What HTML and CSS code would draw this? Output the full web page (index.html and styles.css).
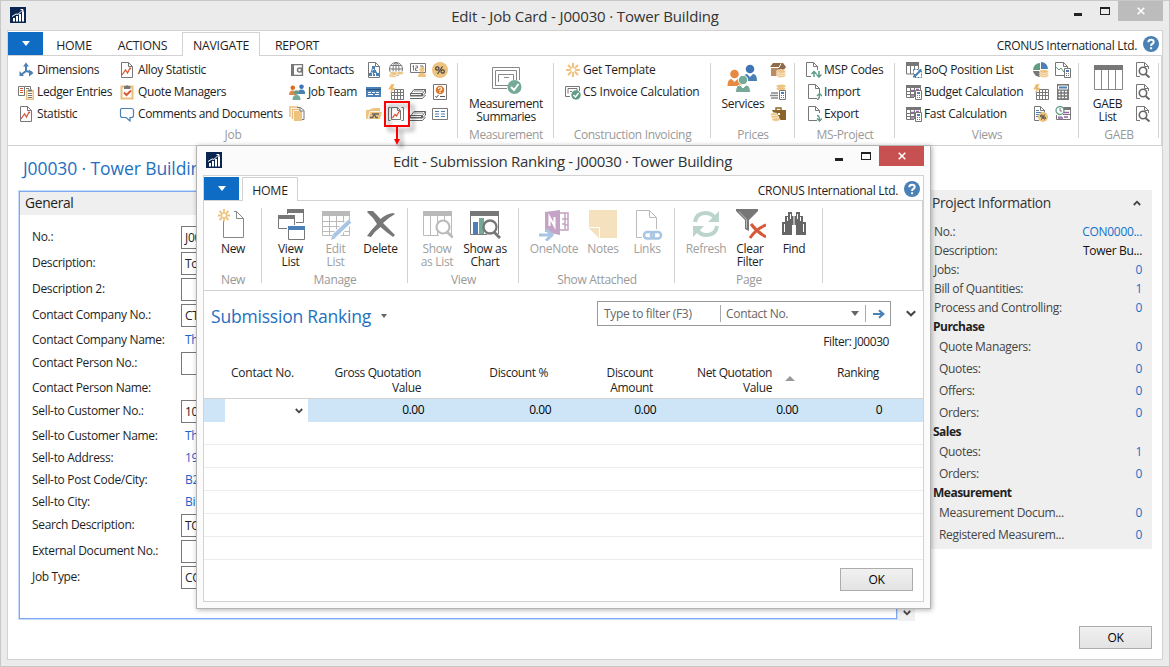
FILE: index.html
```html
<!DOCTYPE html>
<html lang="en">
<head>
<meta charset="utf-8">
<title>Edit - Job Card - J00030 · Tower Building</title>
<link rel="stylesheet" href="styles.css">
</head>
<body>
<svg class="defs" width="0" height="0" aria-hidden="true">
  <symbol id="logo" viewBox="0 0 16 16"><path fill="#0a2550" d="M0 0h16v16H0z"/><path fill="#fff" d="M3 11h2v3.500H3zM6 9h2v5.500H6zM9 7h2v7.500H9zM12 4.500h2v10h-2z"/><path fill="none" stroke="#fff" d="M2 9.500l4-2.500 2 .3 5-4.500M10.500 2.500H13V5"/></symbol>
  <symbol id="dims" viewBox="0 0 16 16"><path fill="none" stroke="#4a80b5" stroke-width="2" d="M8 3v6L3.500 12.500M8 9l6 1.500"/><path fill="#4a80b5" d="M8 .5l3 4H5zM1.500 14V9l4.500 5zM15.500 11l-4.500 3.500V7.500z"/></symbol>
  <symbol id="ledger" viewBox="0 0 16 16"><path fill="#fff" stroke="#777" d="M.5 2.500h6v9h-6zM6.500 2.500h6v3"/><path stroke="#d8593a" d="M2 4.500h3M2 6.500h3M2 8.500h3"/><path stroke="#777" d="M8 4.500h3M6 11.500H1"/><path fill="#fff" stroke="#e9bf7e" stroke-width="1.500" d="M8.700 6.700h6.500v8.500H8.700z"/><path fill="#777" d="M10 5.500h4v2h-4z"/><path stroke="#777" d="M10 9.500h4M10 11.500h4M10 13.500h4"/></symbol>
  <symbol id="stat" viewBox="0 0 16 16"><path fill="#fff" stroke="#777" d="M2.500.5h7l4 4v11h-11zM9.500.5v4h4"/><path fill="none" stroke="#d8593a" stroke-width="1.300" d="M3 13l3.500-5 2 3 2.500-5 1 1"/></symbol>
  <symbol id="clip" viewBox="0 0 16 16"><path fill="#fff" stroke="#e9bf7e" stroke-width="2" d="M2.500 2.500h11v12h-11z"/><path fill="#777" d="M5 2h2a1.300 1.300 0 012.400 0h2v3H5z"/><path fill="none" stroke="#d8593a" stroke-width="2" d="M5 8.500l2.500 2.500L12 6.500"/></symbol>
  <symbol id="bubble" viewBox="0 0 16 16"><path fill="#fff" stroke="#4a80b5" stroke-width="1.200" d="M2.500 2.500h10q2 0 2 2v5q0 2-2 2H11v3.500l-4-3.500H3.500q-2 0-2-2v-5q0-2 1-2z"/></symbol>
  <symbol id="contacts" viewBox="0 0 16 16"><path fill="#777" d="M2 2h3v12H2z"/><path fill="none" stroke="#777" stroke-width="1.300" d="M4 2.600h9.500v10.800H4"/><circle cx="10.500" cy="8" r="2" fill="none" stroke="#777" stroke-width="1.500"/><path stroke="#777" stroke-width="1.500" d="M13.200 5v6"/></symbol>
  <symbol id="team" viewBox="0 0 16 16"><circle cx="12.500" cy="2.800" r="2.300" fill="#3f75b5"/><path fill="#4a80b5" d="M9 9q0-3.500 3.500-3.500T16 9v1H9z"/><circle cx="3.800" cy="3.800" r="2.300" fill="#dd6b20"/><path fill="#e08a4a" d="M0 11q0-4.500 3.500-4.500T7 11z"/><circle cx="7.500" cy="8.500" r="2.300" fill="#5f9d85"/><path fill="#74aa97" d="M3.500 16q0-5 4-5t4 5z"/></symbol>
  <symbol id="docs" viewBox="0 0 16 16"><path fill="none" stroke="#e9bf7e" stroke-width="1.500" d="M1 11V1h8M3.500 13V3.500H11"/><path fill="#edc37f" d="M5 5h8v10H5z"/><path fill="none" stroke="#777" d="M8 1.500h3.500l3.500 3v9h-2M11 1.500v3.500h3.500"/></symbol>
  <symbol id="tree" viewBox="0 0 16 16"><path fill="#fff" stroke="#777" d="M2.500.5h7l4 4v11h-11zM9.500.5v4h4"/><path fill="none" stroke="#4a80b5" d="M7 5L4.500 12M7 5l4.500 7M6 8.500l2 4"/><path fill="#4a80b5" d="M6 4h3v3H6zM3 11h3v3H3zM7 8h3v3H7zM10 11h3v3h-3zM7 12h2v2H7z"/></symbol>
  <symbol id="coins" viewBox="0 0 16 16"><g fill="#edc37f" stroke="#fff" stroke-width=".6"><ellipse cx="11" cy="13.500" rx="4.500" ry="2"/><ellipse cx="11" cy="11.500" rx="4.500" ry="2"/><ellipse cx="11" cy="9.500" rx="4.500" ry="2"/></g></symbol>
  <symbol id="globe" viewBox="0 0 16 16"><g fill="none" stroke="#777"><circle cx="8" cy="7" r="6.500"/><ellipse cx="8" cy="7" rx="3" ry="6.500"/><path d="M8 .5v13M1.500 7h13M2.800 3.500h10.500M2.800 10.500h10.500"/></g><g fill="#edc37f" stroke="#fff" stroke-width=".6"><ellipse cx="5" cy="13.500" rx="4" ry="2"/><ellipse cx="6" cy="11.500" rx="4" ry="2"/><ellipse cx="12" cy="11" rx="3.500" ry="1.700"/></g></symbol>
  <symbol id="numuser" viewBox="0 0 16 16"><path fill="#fff" stroke="#777" d="M.5 1.500h15v9H.5z"/><path fill="none" stroke="#777" d="M2.500 4.500l1-1v5M5.500 4h2v2h-2v2.500h2M10 4h3v2"/><circle cx="12" cy="7.500" r="2.500" fill="#edc37f"/><path fill="#edc37f" d="M8 15q0-4.500 4-4.500t4 4.500z"/></symbol>
  <symbol id="pct" viewBox="0 0 16 16"><circle cx="8" cy="8" r="8" fill="#edc37f"/><g fill="none" stroke="#444" stroke-width="1.200"><circle cx="5.300" cy="6.500" r="1.700"/><circle cx="10.700" cy="9.500" r="1.700"/><path d="M10.500 4.500l-5 7.500"/></g></symbol>
  <symbol id="card" viewBox="0 0 16 16"><path fill="#4a80b5" d="M0 3h15v10H0z"/><path stroke="#fff" stroke-dasharray="3 1" d="M2 8.500h11"/><path stroke="#fff" d="M2 10.500h5M9 10.500h4"/><path stroke="#294f7c" d="M0 5.500h15"/></symbol>
  <symbol id="boltgrid" viewBox="0 0 16 16"><path fill="#fff" stroke="#777" d="M3.500 5.500h12v10h-12zM6.500 5v10M9.500 5v10M12.500 5v10M3 8.500h12M3 11.500h12"/><path fill="#edb766" stroke="#fff" stroke-width=".5" d="M3 0h4L5 3.500h3L1.500 10l1.500-4.500H0z"/></symbol>
  <symbol id="books" viewBox="0 0 16 16"><path fill="#fff" stroke="#666" d="M4 5.500h11.500l-3 4H1zM12.500 9.500V12l3-3V5.500"/><path stroke="#888" d="M4 7h9"/><path fill="#666" d="M0 9h12.500v3.500H0z"/><path stroke="#fff" stroke-width=".9" d="M1 10.500h10"/><path stroke="#666" fill="none" d="M0 14.500h12.500l3-3.500"/></symbol>
  <symbol id="qsheet" viewBox="0 0 16 16"><path fill="#fff" stroke="#777" d="M1.500.5h13v15h-13z"/><circle cx="8" cy="6" r="4.300" fill="#dd7b2e"/><path fill="none" stroke="#fff" stroke-width="1.200" d="M6.500 5q0-1.500 1.500-1.500t1.500 1.300T8 6.500v.8M8 8v1"/><path fill="none" stroke="#555" d="M3.500 12l1 1.500L6.500 11M8 12.500h5"/></symbol>
  <symbol id="folder" viewBox="0 0 16 16"><path fill="#edc37f" d="M0 13V4h2l6-2h6v4h2l-2 7z"/><path stroke="#fff" fill="none" stroke-width=".8" d="M2 13l2-7.500h10"/><path stroke="#666" fill="none" stroke-width="1.300" d="M4 11.500h2.500L9 8h4M6 8h2l2 3.500h2"/></symbol>
  <symbol id="ranking" viewBox="0 0 16 16"><path fill="none" stroke="#777" d="M2.500 1.500h-2v13h2M13.500 1.500h2v13h-2"/><path fill="#fff" stroke="#777" d="M3.500 1.500h6l3 3v9h-9zM9.500 1.500v3h3"/><path fill="none" stroke="#e0442c" stroke-width="1.200" d="M4.500 12L7 8.500 8.500 10 11.500 5"/></symbol>
  <symbol id="listcard" viewBox="0 0 16 16"><path fill="#fff" stroke="#777" d="M.5 2.500h15v11H.5z"/><path stroke="#4a80b5" d="M3 5.500h4M9 5.500h4M3 8h4M9 8h4M3 10.500h4M9 10.500h4"/></symbol>
  <symbol id="measure" viewBox="0 0 32 32"><path fill="none" stroke="#888" d="M17 24.500H2.500v-21h27V16M5.500 21.500v-15h21V16M5 21.500h13M8.500 18v-7.500h15V16M14 13.500h5"/><circle cx="24.500" cy="23" r="7" fill="#74aa97"/><path fill="none" stroke="#fff" stroke-width="2" d="M21 23l3 3 4.500-6"/></symbol>
  <symbol id="burst" viewBox="0 0 16 16"><path stroke="#edc37f" stroke-width="2" d="M8 1v4M8 11v4M1 8h4M11 8h4M3 3l3 3M10 10l3 3M13 3l-3 3M6 10l-3 3"/><circle cx="8" cy="8" r="2.500" fill="none" stroke="#edc37f"/></symbol>
  <symbol id="invoice" viewBox="0 0 16 16"><path fill="none" stroke="#777" d="M5 12.500H.5v-10h14V7M3 9.500v-5h9V7M5 7.500h2"/><circle cx="11" cy="11" r="4.700" fill="#5f9d85"/><path fill="none" stroke="#fff" stroke-width="1.400" d="M8.500 11l2 2 3-4"/></symbol>
  <symbol id="people" viewBox="0 0 32 32"><circle cx="24" cy="5" r="4.300" fill="#3f75b5"/><path fill="#4a80b5" d="M17 17q0-7 4-7l3 3 3-3q4 0 4 7z"/><circle cx="8.500" cy="10" r="4.300" fill="#e68a42"/><path fill="#e68a42" d="M1.500 22q0-7 4-7l3 3 3-3q4 0 4 7z"/><circle cx="17" cy="16" r="4.700" fill="#74aa97" stroke="#fff"/><path fill="#74aa97" stroke="#fff" d="M9.500 28.500q0-7.500 4.500-7.500l3 3 3-3q4.500 0 4.500 7.500z"/></symbol>
  <symbol id="boxcoins" viewBox="0 0 16 16"><path fill="#8e6a48" d="M3 1h10l3 4-3 4H3L0 5z"/><path fill="#b88c60" d="M0 5h8v9H1V6z"/><path stroke="#fff" d="M0 5.500h9l2-4" fill="none"/><use href="#coins"/></symbol>
  <symbol id="coincalc" viewBox="0 0 16 16"><g fill="#edc37f"><ellipse cx="11" cy="2" rx="4.500" ry="1.500"/><ellipse cx="11" cy="4.500" rx="4.500" ry="1.500"/></g><path stroke="#888" stroke-width="1.700" d="M1 9h7M0 11.500h8M1 14h7"/><path fill="#fff" stroke="#777" d="M9.500 6.500h6v9h-6z"/><path fill="#4a80b5" d="M11 8h3v2h-3z"/><path stroke="#4a80b5" stroke-dasharray="1 1" d="M11 11.500h3M11 13.500h3"/></symbol>
  <symbol id="casecoins" viewBox="0 0 16 16"><path fill="none" stroke="#8a6428" stroke-width="1.400" d="M6 4V2h5v2"/><path fill="#8a6428" d="M2 4h14v10H7z"/><path fill="#fff" d="M8 7h2v2H8z"/><g fill="#edc37f" stroke="#fff" stroke-width=".6"><ellipse cx="4" cy="8.500" rx="3.500" ry="1.700"/><ellipse cx="5" cy="11" rx="4" ry="1.800"/><ellipse cx="6" cy="13.500" rx="4" ry="1.800"/></g></symbol>
  <symbol id="msp" viewBox="0 0 16 16"><path fill="#fff" stroke="#777" d="M5 14.500H.5V.5h7l4 4V8M7.500.5v4h4"/><path fill="none" stroke="#5f9d85" stroke-width="1.500" d="M8 15v-5M5.500 12L8 9.500l2.500 2.500M13 9v5M10.500 12.500L13 15l2.500-2.500"/></symbol>
  <symbol id="imp" viewBox="0 0 16 16"><path fill="#fff" stroke="#777" d="M11 14.500H2.500V.5h7l4 4V9M9.500.5v4h4"/><path fill="none" stroke="#5f9d85" stroke-width="1.400" d="M11 15.500q2.500 0 2.500-5M11 12l2.500-2.500L16 12"/></symbol>
  <symbol id="exp" viewBox="0 0 16 16"><path fill="#fff" stroke="#777" d="M11 14.500H2.500V.5h7l4 4V7M9.500.5v4h4"/><path fill="none" stroke="#5f9d85" stroke-width="1.400" d="M11 9.500q2.500 0 2.500 5M11 12.500l2.500 2.500 2.500-2.500"/></symbol>
  <symbol id="boq" viewBox="0 0 16 16"><path fill="#777" d="M0 0h13v4H0z"/><path fill="none" stroke="#777" d="M.5 3v9H7M4.500 4v8M8.500 4v8M12.500 4v3"/><path fill="#fff" stroke="#4a80b5" d="M7.500 7.500h8v8h-8z" stroke-dasharray="2 1"/><path stroke="#4a80b5" stroke-width="2" d="M9 14l5-5M12.500 9H15M9 12v3"/></symbol>
  <symbol id="calcgrid" viewBox="0 0 16 16"><path fill="#777" d="M0 1h15v3H0z"/><path fill="none" stroke="#777" d="M.5 4v9.500H8M4.500 4v9M8.500 4v9M14.500 4v2M0 7.500h8M0 10.500h8"/><path stroke="#9464ad" stroke-width="1.300" d="M5 6.500h3M5 12h3M10 5.500h3"/><path fill="#fff" stroke="#777" d="M9.500 6.500h6v9h-6z"/><path fill="#4a80b5" d="M11 8h3v2h-3z"/><path stroke="#777" stroke-dasharray="1 1" d="M11 11.500h3M11 13.500h3"/></symbol>
  <symbol id="pie" viewBox="0 0 16 16"><path fill="#5f9d85" d="M7 8H0a7 7 0 017-7z"/><path fill="#4a80b5" d="M8 7V0a7 7 0 017 7z"/><path fill="#777" d="M7 9v6a7 7 0 01-7-6z"/><use href="#coins"/></symbol>
  <symbol id="pagecalc" viewBox="0 0 16 16"><path fill="#fff" stroke="#777" d="M9 13.500H.5V.5h8l4 4V6M8.500.5v4h4"/><path fill="none" stroke="#5f9d85" d="M1 5l3 3 2-2 3 4"/><path fill="#fff" stroke="#777" d="M9.500 6.500h6v9h-6z"/><path fill="#4a80b5" d="M11 8h3v2h-3z"/><path stroke="#777" stroke-dasharray="1 1" d="M11 11.500h3M11 13.500h3"/></symbol>
  <symbol id="calc" viewBox="0 0 16 16"><path fill="#777" d="M2 0h12v16H2z"/><path fill="#4a80b5" stroke="#fff" d="M3.500 2h9v3h-9z"/><path stroke="#fff" stroke-width="1.700" stroke-dasharray="2 1.300" d="M3.500 7.500h10M3.500 10.500h10M3.500 13.500h10"/></symbol>
  <symbol id="pagepct" viewBox="0 0 16 16"><path fill="#fff" stroke="#777" d="M6 14.500H1.500V.5h6l4 4V7M7.500.5v4h4"/><path stroke="#4a80b5" d="M3 4.500h3M3 6.500h6M3 8.500h3M3 10.500h2"/><circle cx="10" cy="11" r="5" fill="#edc37f"/><g fill="none" stroke="#444"><circle cx="8.500" cy="10" r="1"/><circle cx="11.500" cy="12" r="1"/><path d="M11.500 8.500l-3 5"/></g></symbol>
  <symbol id="timegrid" viewBox="0 0 16 16"><path fill="#777" d="M8 1h8v3H8z"/><path fill="none" stroke="#777" d="M1.500 9v4.500h14V4M8 8.500h7M3 11h4"/><path stroke="#9464ad" stroke-width="1.300" d="M9 6.500h5M3 12h5M9 11h4"/><circle cx="5" cy="4.500" r="4" fill="#fff" stroke="#5f9d85" stroke-width="1.300"/><path fill="none" stroke="#777" d="M5 2v3h2"/></symbol>
  <symbol id="gaeb" viewBox="0 0 32 32"><path fill="#777" d="M2 1h29v5H2z"/><path fill="none" stroke="#888" d="M2.500 6v19.500h28V6M9.500 6v19M16.500 6v19M23.500 6v19"/></symbol>
  <symbol id="find16" viewBox="0 0 16 16"><path fill="#fff" stroke="#777" d="M5 14.500H1.500V.5h8l4 4V7M9.500.5v4h4"/><circle cx="8" cy="9" r="3.700" fill="#fff" stroke="#666" stroke-width="1.600"/><path stroke="#666" stroke-width="2" d="M10.500 12l4 3.500"/></symbol>
  <symbol id="help" viewBox="0 0 16 16"><circle cx="8" cy="8" r="8" fill="#4a80b5"/><path fill="none" stroke="#fff" stroke-width="2" d="M5.300 6.300Q5.300 3.800 8 3.800t2.700 2.300Q10.700 7.300 9 8.200 8.100 8.800 8.100 10M8.100 11.200v2"/></symbol>
  <symbol id="newdoc" viewBox="0 0 32 32"><path fill="none" stroke="#888" d="M6.500 12v16.500h20V9.500l-7-7H17M19.500 2v7.500h7"/><path stroke="#edc37f" stroke-width="1.800" d="M7 0v4M7 8.500v4M1 6.500h4M9 6.500h4M2.500 2l3 3M8.500 8l3 3M11.500 2l-3 3M5.500 8l-3 3"/><circle cx="7" cy="6.500" r="2.400" fill="none" stroke="#edc37f"/></symbol>
  <symbol id="windows" viewBox="0 0 32 32"><g fill="#fff" stroke="#777"><path d="M12.500.5h16v13h-16z"/><path stroke="#fff" stroke-width="3" d="M3.500 6.500h16v13h-16z"/><path d="M3.500 6.500h16v13h-16z"/><path stroke="#fff" stroke-width="3" d="M13.500 17.500h16v13h-16z"/><path d="M13.500 17.500h16v13h-16z"/></g><path fill="#777" d="M12 0h17v4H12zM3 6h17v4H3z"/><path fill="#4a80b5" d="M13 17h17v4H13z"/></symbol>
  <symbol id="editlist" viewBox="0 0 32 32"><path fill="#b9b9b9" d="M2 2h28v5H2z"/><path fill="none" stroke="#bbb" d="M2.500 7v19.500h27V7M9.500 7v19M16.500 7v19M23.500 7v19M2 12.500h27M2 17.500h27M2 22.500h27"/><path stroke="#fff" stroke-width="7" d="M14 28L30 12"/><path stroke="#a9c5e4" stroke-width="4" d="M14 27L30 12"/><path fill="#a9c5e4" d="M11 31l1.500-5 3.500 3z"/></symbol>
  <symbol id="delete" viewBox="0 0 32 32"><path fill="#777" d="M3 2h5q4 4 7.500 8Q21 5 28 4l2 1q-7 4-12 9 5 5 12 12l-2 2q-7-5-12.500-10Q10 22 6 28l-4-1q5-7 10-12Q8 8 2 3z"/></symbol>
  <symbol id="showlist" viewBox="0 0 32 32"><path fill="#b9b9b9" d="M2 2h29v5H2z"/><path fill="none" stroke="#bbb" d="M2.500 7v19.500H18M9.500 7v20M16.500 7v20M23.500 7v5M30.500 7v20"/><circle cx="22" cy="18" r="6.500" fill="#fff" stroke="#bbb" stroke-width="2.200"/><path stroke="#bbb" stroke-width="3" d="M26 23l6 5.500"/></symbol>
  <symbol id="showchart" viewBox="0 0 32 32"><path fill="#777" d="M1 2h29v5H1z"/><path fill="none" stroke="#777" d="M1.500 7v18.500H18M29.500 7v18"/><path fill="#4a80b5" d="M4 13h5v12H4z"/><path fill="#74aa97" d="M10 9h5v16h-5z"/><circle cx="21" cy="18" r="6.500" fill="#fff" fill-opacity=".65" stroke="#777" stroke-width="2.300"/><path stroke="#777" stroke-width="3" d="M25 23l6 6"/></symbol>
  <symbol id="onenote" viewBox="0 0 32 32"><path fill="#c4a3c4" d="M7 3l15-2v25L7 23z"/><path fill="none" stroke="#c4a3c4" stroke-width="1.500" d="M22 4h8v17h-8M27 4v17M27 10h3M27 16h3M24 10h3M24 15h3"/><path fill="none" stroke="#fff" stroke-width="2" d="M11.500 17V8l5 9V8"/><path fill="none" stroke="#fff" stroke-width="6" d="M1 26h11"/><path fill="none" stroke="#a9c5e4" stroke-width="3" d="M1 26h12M8 20.500l6 5.500-6 5.500"/></symbol>
  <symbol id="notes" viewBox="0 0 32 32"><path fill="#f5e1bd" d="M2 1h28v28H12L2 19z"/><path fill="#fff" d="M2 18h11v11z"/><path fill="#f5e1bd" d="M2 19h10v10z"/></symbol>
  <symbol id="links" viewBox="0 0 32 32"><path fill="none" stroke="#bbb" d="M11 28.500H5.500v-27h13l7 7V20M18.500 1.500v7h7"/><g fill="none" stroke="#a9c5e4" stroke-width="2.500"><rect x="13" y="23" width="10" height="6.500" rx="3.200"/><rect x="20" y="23" width="10" height="6.500" rx="3.200"/></g></symbol>
  <symbol id="refresh" viewBox="0 0 32 32"><path fill="none" stroke="#bbd5ca" stroke-width="4" d="M5 13q1-8.500 10-9 6-.2 9 4M27 17q-1 8.500-10 9-6 .2-9-4"/><path fill="#bbd5ca" d="M29 2v11H18zM3 28V17h11z"/></symbol>
  <symbol id="clearfilter" viewBox="0 0 32 32"><path fill="#777" d="M2 0h22v2l-9 9v11l-4-2v-9L2 2z"/><path stroke="#bbb" fill="none" d="M5 2.500l7.500 8V19"/><path fill="none" stroke="#d8593a" stroke-width="3" d="M17 15q6 8 15 13M32 16q-10 4-16 13"/></symbol>
  <symbol id="binoc" viewBox="0 0 32 32"><path fill="#666" d="M10 3h4v4h4V3h4v4h3v6h3v13H18V16h-4v10H4V13h3V7h3z"/><path fill="none" stroke="#fff" d="M9.500 8v4M12.500 5v5M19.500 5v5M22.500 8v4M6.500 15v8M25.500 15v8M16 7v9"/></symbol>
</svg>

<div class="window main">
  <header class="titlebar">
    <svg class="logo"><use href="#logo"/></svg>
    <h1 class="caption">Edit - Job Card - J00030 · Tower Building</h1>
    <div class="controls"><i class="min"></i><i class="max"></i><span class="close inactive"><svg viewBox="0 0 8 8"><path d="M.7.7l6.600 6.600M7.300.7L.7 7.300"/></svg></span></div>
  </header>
  <div class="client">
    <nav class="tabs">
      <span class="app-menu"></span>
      <span class="tab home">HOME</span><span class="tab actions">ACTIONS</span><span class="tab active navigate">NAVIGATE</span><span class="tab report">REPORT</span>
      <span class="company">CRONUS International Ltd.</span><svg class="help"><use href="#help"/></svg>
    </nav>
    <section class="ribbon">
      <div class="group job">
        <div class="grid">
          <span class="cmd"><svg><use href="#dims"/></svg><b>Dimensions</b></span>
          <span class="cmd"><svg><use href="#stat"/></svg><b>Alloy Statistic</b></span>
          <span class="cmd"><svg><use href="#contacts"/></svg><b>Contacts</b></span>
          <svg><use href="#tree"/></svg><svg><use href="#globe"/></svg><svg><use href="#numuser"/></svg><svg><use href="#pct"/></svg>
          <span class="cmd"><svg><use href="#ledger"/></svg><b>Ledger Entries</b></span>
          <span class="cmd"><svg><use href="#clip"/></svg><b>Quote Managers</b></span>
          <span class="cmd"><svg><use href="#team"/></svg><b>Job Team</b></span>
          <svg><use href="#card"/></svg><svg><use href="#boltgrid"/></svg><svg><use href="#books"/></svg><svg><use href="#qsheet"/></svg>
          <span class="cmd"><svg><use href="#stat"/></svg><b>Statistic</b></span>
          <span class="cmd"><svg><use href="#bubble"/></svg><b>Comments and Documents</b></span>
          <span class="cmd"><svg><use href="#docs"/></svg></span>
          <svg><use href="#folder"/></svg><svg><use href="#ranking"/></svg><svg><use href="#books"/></svg><svg><use href="#listcard"/></svg>
        </div>
        <span class="group-name">Job</span>
      </div>
      <div class="group measurement"><div class="bigs"><span class="big"><svg><use href="#measure"/></svg>Measurement<br>Summaries</span></div><span class="group-name">Measurement</span></div>
      <div class="group invoicing">
        <div class="list"><span class="cmd"><svg><use href="#burst"/></svg><b>Get Template</b></span><span class="cmd"><svg><use href="#invoice"/></svg><b>CS Invoice Calculation</b></span></div>
        <span class="group-name">Construction Invoicing</span>
      </div>
      <div class="group prices">
        <div class="bigs"><span class="big"><svg><use href="#people"/></svg>Services</span><div class="stack"><svg><use href="#boxcoins"/></svg><svg><use href="#coincalc"/></svg><svg><use href="#casecoins"/></svg></div></div>
        <span class="group-name">Prices</span>
      </div>
      <div class="group msproject">
        <div class="list"><span class="cmd"><svg><use href="#msp"/></svg><b>MSP Codes</b></span><span class="cmd"><svg><use href="#imp"/></svg><b>Import</b></span><span class="cmd"><svg><use href="#exp"/></svg><b>Export</b></span></div>
        <span class="group-name">MS-Project</span>
      </div>
      <div class="group views">
        <div class="grid">
          <span class="cmd"><svg><use href="#boq"/></svg><b>BoQ Position List</b></span><svg><use href="#pie"/></svg><svg><use href="#pagecalc"/></svg>
          <span class="cmd"><svg><use href="#calcgrid"/></svg><b>Budget Calculation</b></span><svg><use href="#boltgrid"/></svg><svg><use href="#calc"/></svg>
          <span class="cmd"><svg><use href="#calcgrid"/></svg><b>Fast Calculation</b></span><svg><use href="#pagepct"/></svg><svg><use href="#timegrid"/></svg>
        </div>
        <span class="group-name">Views</span>
      </div>
      <div class="group gaeb">
        <div class="bigs"><span class="big"><svg><use href="#gaeb"/></svg>GAEB<br>List</span><div class="stack"><svg><use href="#find16"/></svg><svg><use href="#find16"/></svg><svg><use href="#find16"/></svg></div></div>
        <span class="group-name">GAEB</span>
      </div>
    </section>
    <main class="job-page">
      <div class="job-card">
        <h2 class="page-title">J00030 · Tower Building</h2>
        <div class="panel-row">
          <section class="panel">
            <h3>General</h3>
            <dl class="fields">
              <div class="boxed"><dt>No.:</dt><dd>J00030</dd></div>
              <div class="boxed"><dt>Description:</dt><dd>Tower Building</dd></div>
              <div class="boxed"><dt>Description 2:</dt><dd></dd></div>
              <div class="boxed"><dt>Contact Company No.:</dt><dd>CT</dd></div>
              <div><dt>Contact Company Name:</dt><dd>Th</dd></div>
              <div class="boxed"><dt>Contact Person No.:</dt><dd></dd></div>
              <div><dt>Contact Person Name:</dt><dd></dd></div>
              <div class="boxed"><dt>Sell-to Customer No.:</dt><dd>10</dd></div>
              <div><dt>Sell-to Customer Name:</dt><dd>Th</dd></div>
              <div><dt>Sell-to Address:</dt><dd>19</dd></div>
              <div><dt>Sell-to Post Code/City:</dt><dd>B2</dd></div>
              <div><dt>Sell-to City:</dt><dd>Bir</dd></div>
              <div class="boxed"><dt>Search Description:</dt><dd>TO</dd></div>
              <div class="boxed"><dt>External Document No.:</dt><dd></dd></div>
              <div class="boxed"><dt>Job Type:</dt><dd>CO</dd></div>
            </dl>
          </section>
          <div class="scroll"><svg class="chev" viewBox="0 0 8 6"><path d="M.8 1L4 4.300 7.200 1"/></svg></div>
        </div>
      </div>
      <aside class="side">
        <section class="factbox">
          <h3>Project Information<svg class="chev" viewBox="0 0 8 6"><path d="M.8 5L4 1.700 7.200 5"/></svg></h3>
          <p>No.:<a>CON0000...</a></p>
          <p>Description:<span>Tower Bu...</span></p>
          <p>Jobs:<a>0</a></p>
          <p>Bill of Quantities:<a>1</a></p>
          <p>Process and Controlling:<a>0</a></p>
          <h4 class="first">Purchase</h4>
          <p class="sub">Quote Managers:<a>0</a></p>
          <p class="sub">Quotes:<a>0</a></p>
          <p class="sub">Offers:<a>0</a></p>
          <p class="sub">Orders:<a>0</a></p>
          <h4>Sales</h4>
          <p class="sub">Quotes:<a>1</a></p>
          <p class="sub">Orders:<a>0</a></p>
          <h4>Measurement</h4>
          <p class="sub">Measurement Docum...<a>0</a></p>
          <p class="sub">Registered Measurem...<a>0</a></p>
        </section>
        <button class="ok">OK</button>
      </aside>
    </main>
  </div>
</div>

<div class="window dialog">
  <header class="titlebar">
    <svg class="logo"><use href="#logo"/></svg>
    <h1 class="caption">Edit - Submission Ranking - J00030 · Tower Building</h1>
    <div class="controls"><i class="min"></i><i class="max"></i><span class="close"><svg viewBox="0 0 8 8"><path d="M.7.7l6.600 6.600M7.300.7L.7 7.300"/></svg></span></div>
  </header>
  <div class="client">
    <nav class="tabs">
      <span class="app-menu"></span><span class="tab active dlg-home">HOME</span>
      <span class="company">CRONUS International Ltd.</span><svg class="help"><use href="#help"/></svg>
    </nav>
    <section class="ribbon">
      <div class="group d-new"><div class="bigs"><span class="big"><svg><use href="#newdoc"/></svg>New</span></div><span class="group-name">New</span></div>
      <div class="group d-manage"><div class="bigs"><span class="big"><svg><use href="#windows"/></svg>View<br>List</span><span class="big off"><svg><use href="#editlist"/></svg>Edit<br>List</span><span class="big"><svg><use href="#delete"/></svg>Delete</span></div><span class="group-name">Manage</span></div>
      <div class="group d-view"><div class="bigs"><span class="big off"><svg><use href="#showlist"/></svg>Show<br>as List</span><span class="big"><svg><use href="#showchart"/></svg>Show as<br>Chart</span></div><span class="group-name">View</span></div>
      <div class="group d-attached"><div class="bigs"><span class="big off wide"><svg><use href="#onenote"/></svg>OneNote</span><span class="big off"><svg><use href="#notes"/></svg>Notes</span><span class="big off"><svg><use href="#links"/></svg>Links</span></div><span class="group-name">Show Attached</span></div>
      <div class="group d-page"><div class="bigs"><span class="big off"><svg><use href="#refresh"/></svg>Refresh</span><span class="big"><svg><use href="#clearfilter"/></svg>Clear<br>Filter</span><span class="big"><svg><use href="#binoc"/></svg>Find</span></div><span class="group-name">Page</span></div>
    </section>
    <div class="toolbar">
      <h2>Submission Ranking<i class="caret"></i></h2>
      <div class="filter"><span class="query">Type to filter (F3)</span><span class="field">Contact No.<i class="drop"></i></span><span class="go"><svg viewBox="0 0 12 10"><path d="M0 5h9.500M6 1.200L10.300 5 6 8.800"/></svg></span></div>
      <svg class="chev expand" viewBox="0 0 10 7"><path d="M.8 1.200L5 5.300 9.200 1.200"/></svg>
    </div>
    <p class="applied">Filter: J00030</p>
    <div class="cols head"><span></span><span class="left">Contact No.</span><span>Gross Quotation<br>Value</span><span>Discount %</span><span>Discount<br>Amount</span><span class="sorted">Net Quotation<br>Value<i></i></span><span>Ranking</span></div>
    <div class="cols row"><span></span><span class="edit"><svg class="chev" viewBox="0 0 8 6"><path d="M.8 1L4 4.300 7.200 1"/></svg></span><span>0.00</span><span>0.00</span><span>0.00</span><span>0.00</span><span>0</span></div>
    <div class="lines"><i></i><i></i><i></i><i></i><i></i><i></i></div>
    <button class="ok">OK</button>
  </div>
</div>
<svg class="pointer" viewBox="0 0 40 56"><path class="box" d="M5 5h24v24H5z"/><path class="stem" d="M17 30v13"/><path class="tip" d="M14 42h6l-3 6z"/></svg>
</body>
</html>
```
FILE: styles.css
```css
* { box-sizing: border-box; }
body { margin: 0; width: 1170px; height: 667px; overflow: hidden; position: relative; font: 12px/16px "Open Sans", "Noto Sans", sans-serif; letter-spacing: -0.32px; color: #1e1e1e; }
h1, h2, h3, h4, p, dl, dd { margin: 0; font-weight: 400; }
b { font-weight: 400; }
.defs { position: absolute; }

.window { display: flex; flex-direction: column; border: 1px solid #c8c8c8; }
.main { width: 1170px; height: 667px; background: #ebebeb; padding: 0 6px 6px; }
.dialog { position: absolute; left: 196px; top: 145px; width: 735px; height: 464px; background: #fbfbfb; border-color: #b4b4b4; padding: 0 6px 6px; box-shadow: 1px 1px 5px rgba(0,0,0,.3); }
.titlebar { height: 29px; flex: none; display: flex; align-items: flex-start; }
.logo { width: 16px; height: 16px; margin: 6px 0 0 3px; flex: none; }
.dialog .logo { margin-left: 3px; margin-top: 6px; }
.caption { flex: 1; text-align: center; font-size: 15px; line-height: 30px; letter-spacing: -0.15px; color: #333; padding-left: 70px; }
.dialog .caption { padding-left: 68px; letter-spacing: -0.31px; }
.controls { display: flex; align-items: flex-start; }
.min { width: 8px; height: 3px; background: #222; margin: 12px 18px 0 0; }
.max { width: 10px; height: 8px; border: 1px solid #222; border-top-width: 2px; margin: 6px 8px 0 0; }
.close { width: 45px; height: 20px; background: #c75050; display: flex; align-items: center; justify-content: center; }
.close svg { width: 8px; height: 8px; fill: none; stroke: #fff; stroke-width: 1.600; }
.inactive { background: #bcbcbc; }
.client { flex: 1; min-height: 0; background: #fff; border: 1px solid #d2d2d2; display: flex; flex-direction: column; }

.tabs { height: 24px; flex: none; display: flex; padding-top: 1px; position: relative; z-index: 1; }
.app-menu { width: 35px; height: 23px; background: #0f6cc4; display: flex; align-items: center; justify-content: center; }
.app-menu::after { content: ""; border: 4px solid transparent; border-top: 5px solid #fff; border-bottom: 0; }
.tab { height: 24px; line-height: 28px; text-align: center; font-size: 12.300px; letter-spacing: -0.25px; }
.home { width: 62px; } .actions { width: 75px; margin-right: 2px; } .report { width: 74px; }
.navigate { width: 78px; }
.dlg-home { width: 56px; margin-left: 3px; }
.active { border: 1px solid #d2d2d2; border-bottom: 0; background: #fff; height: 24px; line-height: 26px; }
.company { margin-left: auto; line-height: 28px; letter-spacing: -0.32px; }
.help { width: 16px; height: 16px; margin: 4px 3px 0 6px; }

.ribbon { height: 91px; flex: none; border: 1px solid #d2d2d2; border-left: 0; display: flex; }
.group { display: flex; flex-direction: column; padding-top: 3px; position: relative; flex: none; }
.group::after { content: ""; position: absolute; right: 0; top: 7px; width: 1px; height: 75px; background: #d2d2d2; }
.group-name { margin-top: 1px; line-height: 18px; text-align: center; color: #999; }
.grid { display: grid; grid-auto-rows: 22px; align-items: center; }
.list { height: 66px; }
.cmd { height: 22px; display: flex; align-items: center; gap: 2px; white-space: nowrap; line-height: 22px; }
.ribbon svg { width: 16px; height: 16px; flex: none; }
.job { width: 450px; }
.job .grid { padding-left: 11px; grid-template-columns: 101px 170px 77px repeat(4, 22px); letter-spacing: -0.38px; }
.job svg { position: relative; left: -1px; }
.measurement { width: 96px; letter-spacing: -0.42px; }
.invoicing { width: 157px; } .invoicing .list { padding-left: 11px; letter-spacing: -0.24px; }
.prices { width: 84px; }
.msproject { width: 100px; } .msproject .list { padding-left: 11px; }
.views { width: 184px; }
.views .grid { padding-left: 11px; grid-template-columns: 127px 22px 22px; }
.gaeb { width: 80px; }
.bigs { height: 66px; display: flex; }
.big { text-align: center; line-height: 13px; padding-top: 5px; width: 44px; white-space: nowrap; display: block; }
.ribbon .big svg { display: block; width: 32px; height: 32px; margin: 0 auto 1px; }
.off { color: #a0a0a0; }
.measurement .big { width: 96px; }
.prices .big { width: 64px; } .prices .big svg { margin-left: 15px; }
.gaeb .big { width: 57px; } .gaeb .stack { margin-left: -1px; }
.stack { display: flex; flex-direction: column; gap: 6px; padding-top: 3px; margin-left: -5px; }
.d-new { width: 58px; } .d-new .big { width: 60px; }
.d-manage { width: 146px; } .d-manage .bigs { padding-left: 6px; } .d-manage .big { width: 45px; }
.d-view { width: 111px; } .d-view .bigs { padding-left: 5px; } .d-view .big { width: 48px; }
.d-attached { width: 156px; } .d-attached .bigs { padding-left: 8px; } .d-attached .wide { width: 54px; }
.d-page { width: 148px; } .d-page .bigs { padding-left: 9px; }

.job-page { flex: 1; display: flex; justify-content: space-between; padding: 0 10px 10px; }
.job-card { width: 897px; }
.page-title { font-size: 17.500px; line-height: 44px; height: 45px; padding-left: 5px; color: #1f70c1; letter-spacing: -0.1px; }
.panel-row { display: flex; gap: 1px; }
.panel { width: 878px; height: 428px; border: 1px solid #7faaf2; box-shadow: 0 0 0 1px #c4dbfa; margin-left: 1px; }
.panel h3 { height: 23px; background: #efefef; font-size: 13.800px; line-height: 22px; padding-left: 5px; }
.fields { padding: 11px 0 0 12px; }
.fields div { height: 22px; display: flex; line-height: 20px; }
.fields .boxed { height: 26px; line-height: 21px; }
.fields dt { width: 149px; }
.fields dd { width: 270px; padding-left: 4px; color: #1e62c9; }
.fields .boxed dd { height: 23px; border: 1px solid #777; padding-left: 3px; color: #222; }
.scroll { width: 17px; background: #f0f0f0; height: 430px; display: flex; align-items: flex-end; justify-content: center; padding-bottom: 5px; }
.chev { width: 8px; height: 6px; fill: none; stroke: #444; stroke-width: 1.800; }
.side { width: 228px; display: flex; flex-direction: column; padding-top: 44px; }
.factbox { height: 359px; background: #efefef; padding: 0 10px 0 8px; color: #444; }
.factbox h3 { height: 32px; line-height: 26px; font-size: 13.800px; display: flex; color: #333; }
.factbox h3 .chev { margin: 10px 1px 0 auto; }
.factbox p { height: 19px; line-height: 19px; display: flex; justify-content: space-between; padding-left: 2px; }
.factbox .sub { height: 22px; line-height: 22px; padding-left: 7px; }
.factbox a { color: #1471cc; }
.factbox span { color: #111; }
.factbox h4 { font-size: 12px; font-weight: 700; height: 17px; line-height: 16px; padding-left: 1px; color: #222; letter-spacing: -0.5px; }
.factbox .first { height: 19px; line-height: 19px; }
.ok { width: 73px; height: 23px; border: 1px solid #acacac; background: linear-gradient(#f1f1f1, #e3e3e3); font: inherit; letter-spacing: inherit; padding: 0; margin: auto 0 0 auto; color: #000; }

.toolbar { display: flex; height: 36px; padding-top: 10px; flex: none; }
.toolbar h2 { width: 386px; height: 30px; padding-left: 7px; margin: 0 7px 0 0; font-size: 17.500px; line-height: 32px; color: #1f70c1; letter-spacing: -0.2px; display: flex; align-items: center; gap: 10px; }
.caret { border: 3px solid transparent; border-top: 4px solid #666; border-bottom: 0; }
.filter { width: 294px; height: 25px; border: 1px solid #999; display: flex; align-items: center; line-height: 23px; color: #666; }
.query { width: 122px; padding-left: 6px; }
.field { width: 146px; border: solid #aaa; border-width: 0 1px; height: 17px; line-height: 17px; padding: 0 6px 0 5px; display: flex; justify-content: space-between; align-items: center; }
.drop { border: 4px solid transparent; border-top: 5px solid #666; border-bottom: 0; }
.go { flex: 1; display: flex; justify-content: center; padding-left: 2px; }
.go svg { width: 12px; height: 10px; fill: none; stroke: #4a80b5; stroke-width: 2.200; }
.expand { width: 10px; height: 7px; margin: 9px 0 0 15px; stroke-width: 2; }
.applied { text-align: right; padding: 7px 34px 0 0; height: 38px; flex: none; letter-spacing: -0.45px; }
.cols { display: grid; grid-template-columns: 21px 84px 118px 127px 105px 142px 84px; text-align: right; flex: none; }
.head { height: 34px; border-bottom: 1px solid #d2d2d2; line-height: 15px; letter-spacing: -0.38px; }
.head span { padding-right: 6px; white-space: nowrap; }
.head .left { text-align: left; padding-left: 6px; letter-spacing: -0.25px; }
.head .sorted { padding-right: 29px; position: relative; }
.sorted i { position: absolute; right: 6px; top: 11px; border: 5px solid transparent; border-bottom: 5px solid #999; border-top: 0; }
.row { height: 23px; background: #cde5f7; line-height: 22px; color: #000; letter-spacing: -0.5px; }
.row span { padding-right: 3px; }
.row .edit { background: #fff; display: flex; justify-content: flex-end; align-items: center; padding-right: 5px; width: 83px; }
.lines i { display: block; height: 23px; border-bottom: 1px solid #ececec; }
.dialog .ok { margin: 8px 10px 0 auto; flex: none; }
.pointer { position: absolute; left: 380px; top: 97px; width: 40px; height: 56px; filter: drop-shadow(4px 4px 2px rgba(0,0,0,.4)); fill: none; }
.box, .stem { stroke: #f00; stroke-width: 2; }
.tip { fill: #f00; }
```
